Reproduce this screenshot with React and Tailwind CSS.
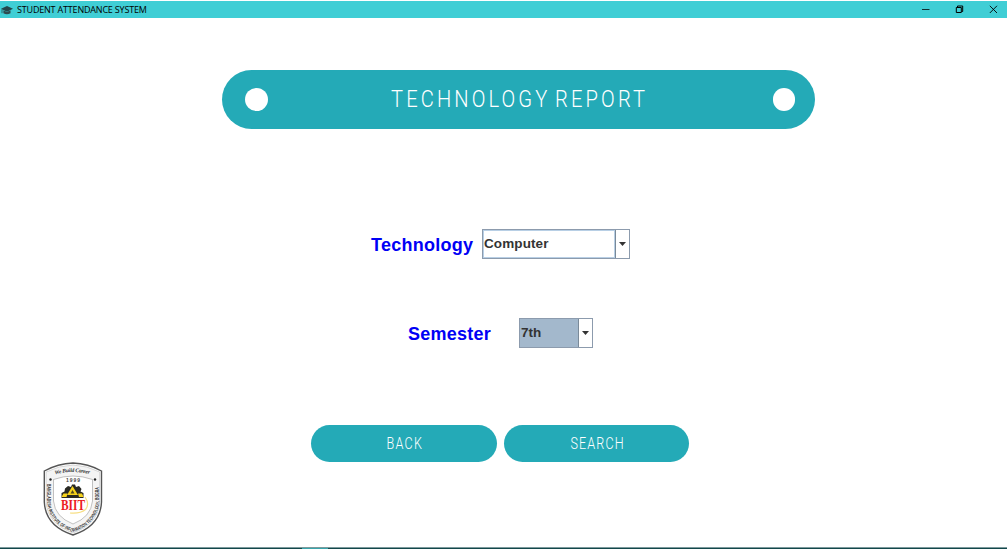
import React from "react";

function TitleBar() {
  return (
    <header className="mt-px flex h-[17px] w-[1007px] shrink-0 items-center justify-between bg-[#40ced5] text-black">
      <div className="flex items-center">
        <svg className="ml-[1px] h-[10px] w-[12px]" viewBox="0 0 12 10" aria-hidden="true">
          <path d="M0 3.8 6 1l6 2.8L6 6.7Z" fill="#24474c" />
          <path d="M2.4 5.2v3Q6 10.2 9.5 8.2v-3L6 7Z" fill="#2e4b50" />
          <path d="M1 4.2v4" stroke="#24474c" strokeWidth=".8" />
        </svg>
        <h1 className="ml-[4px] whitespace-nowrap font-['Open_Sans',sans-serif] text-[9px] leading-[17px] tracking-[-0.19px]">STUDENT ATTENDANCE SYSTEM</h1>
      </div>
      <div className="flex items-center gap-[25px] pr-[9px]">
        <button aria-label="Minimize"><svg className="block h-[9px] w-[9px]" viewBox="0 0 9 9"><path d="M1 4.5h7.5" stroke="#102f32" /></svg></button>
        <button aria-label="Restore"><svg className="block h-[9px] w-[9px]" viewBox="0 0 9 9" fill="none" stroke="#000"><path d="M1.3 2.5h5v5h-5ZM2.5 2.3V1h5.2v5.5H6.7" /></svg></button>
        <button aria-label="Close"><svg className="block h-[9px] w-[9px]" viewBox="0 0 9 9"><path d="m.8.8 7.2 7.2m0-7.2L.8 8" stroke="#000" strokeWidth=".9" /></svg></button>
      </div>
    </header>
  );
}

function Arrow() {
  return <svg className="h-[4px] w-[7px]" viewBox="0 0 7 4" aria-hidden="true"><path d="M0 0h7L3.5 4Z" fill="#333" /></svg>;
}

function Crest() {
  return (
    <svg className="ml-[42px] mt-[-1px] block h-[76px] w-[62px]" viewBox="0 0 62 76" role="img" aria-label="BIIT">
      <defs>
        <path id="motto" d="M13 13.5Q31 8.500 49 13.5" />
        <path id="ring" d="M6.2 23V41Q8 62 31 70Q54 62 56.200 41V22" />
      </defs>
      <path d="M31 2Q46 2.500 59.500 10V41Q58.500 65 31 74Q3.500 65 2.300 41V10Q16 2.500 31 2Z" fill="#fff" stroke="#555" strokeWidth="1.4" />
      <path d="M31 4Q45 4.500 57.700 11V41Q56.500 63 31 72Q5.500 63 4.100 41V11Q17 4.500 31 4Z" fill="#f4f4f4" stroke="#b5b5b5" strokeWidth=".5" />
      <path d="M11.500 18.5Q31 11.500 50.500 18.500V40Q49 56 31 63Q13 56 11.500 40Z" fill="#fff" stroke="#999" strokeWidth=".6" />
      <text className="font-['Liberation_Serif',serif] text-[5.5px] font-bold italic" fill="#333"><textPath href="#motto" textLength="35">We Build Career</textPath></text>
      <text dy="1" className="font-['Liberation_Sans',sans-serif] text-[4.8px] font-bold" fill="#333"><textPath href="#ring" textLength="114" lengthAdjust="spacingAndGlyphs">BANGLADESH INSTITUTE OF INFORMATION TECHNOLOGY, BOGRA</textPath></text>
      <circle cx="8.500" cy="18.500" r="1.200" fill="#222" /><circle cx="53" cy="18.500" r="1.200" fill="#222" />
      <text x="31" y="20.500" textAnchor="middle" textLength="14" className="font-['Liberation_Sans',sans-serif] text-[5px] font-bold" fill="#444">1999</text>
      <path d="M23 27.500 26 25l3 1 1-2.500h3l1 2.500 3-1 2.500 3-1 2.500 3 1.500v5H19.500V32l3-1.500Z" fill="#292923" />
      <path d="m30.500 25 5.500 9H25Z" fill="#f6d31c" />
      <path d="m19.500 36 2-3.500h4l-1 3.500Zm16.500-3.500h4l1.500 3.500H37Z" fill="#f6d31c" />
      <path d="m30.500 29 2 3.500h-4Z" fill="#514821" />
      <path d="M43 36Q48 43 43.500 48.500Q38 53 28 52" fill="none" stroke="#f7df85" strokeWidth="1.200" />
      <text x="31" y="49" textAnchor="middle" textLength="24" lengthAdjust="spacingAndGlyphs" className="font-['Liberation_Serif',serif] text-[15px] font-bold" fill="#ed1c24">BIIT</text>
    </svg>
  );
}

export default function App() {
  return (
    <div className="flex h-[550px] w-[1008px] flex-col overflow-hidden bg-white">
      <TitleBar />
      <main className="flex min-h-0 flex-1 flex-col">
        <div className="ml-[222px] mt-[52px] flex h-[59px] w-[593px] shrink-0 items-center justify-between rounded-[30px] bg-[#24aab7] pl-[23px] pr-[20px]">
          <span className="h-[23px] w-[22.5px] rounded-full bg-white" />
          <h2 className="mr-[2px] mt-[-2px] w-[258px] whitespace-nowrap font-['Roboto',sans-serif] text-[24px] font-light leading-[30px] text-white"><span className="ml-px inline-block origin-left scale-x-[.84] tracking-[3.7px] [word-spacing:-4px]">TECHNOLOGY REPORT</span></h2>
          <span className="h-[23px] w-[22.5px] rounded-full bg-white" />
        </div>
        <div className="ml-[371px] mt-[100px] flex h-[30px] shrink-0">
          <label className="w-[111px] pt-[5px] font-['Liberation_Sans',sans-serif] text-[18px] font-bold leading-[22px] tracking-[.25px] text-[#0000f5]">Technology</label>
          <button className="flex h-[30px] w-[148px] border border-[#8c9bad] text-left">
            <span className="flex h-[28px] w-[132px] border border-[#b8cfe5] font-['Liberation_Sans',sans-serif] text-[13.5px] font-bold leading-[25px] tracking-[.1px] text-[#333]">Computer</span>
            <span className="flex h-[28px] flex-1 items-center justify-center border-l border-[#7a8a99]"><Arrow /></span>
          </button>
        </div>
        <div className="ml-[408px] mt-[59px] flex h-[30px] shrink-0">
          <label className="w-[111px] pt-[5px] font-['Liberation_Sans',sans-serif] text-[18px] font-bold leading-[22px] tracking-[.25px] text-[#0000f5]">Semester</label>
          <button className="flex h-[30px] w-[74px] border border-[#8c9bad] text-left">
            <span className="h-[28px] w-[58px] bg-[#a3b8cc] pl-[1px] font-['Liberation_Sans',sans-serif] text-[13.5px] font-bold leading-[27px] text-[#333]">7th</span>
            <span className="flex h-[28px] flex-1 items-center justify-center border-l border-[#7a8a99]"><Arrow /></span>
          </button>
        </div>
        <div className="ml-[311px] mt-[77px] flex h-[37px] shrink-0 gap-[7px]">
          <button className="h-[37px] w-[186px] rounded-[19px] bg-[#24aab7] font-['Roboto',sans-serif] text-[17px] font-light leading-[37px] text-white"><span className="ml-px inline-block scale-x-[.74] tracking-[1.7px]">BACK</span></button>
          <button className="h-[37px] w-[185px] rounded-[19px] bg-[#24aab7] font-['Roboto',sans-serif] text-[17px] font-light leading-[37px] text-white"><span className="ml-[2px] inline-block scale-x-[.74] tracking-[1.5px]">SEARCH</span></button>
        </div>
        <Crest />
      </main>
      <footer className="mb-px h-[2px] w-[1007px] shrink-0 border-t border-[#7d9a9c] bg-[#12474b]"><div className="ml-[302px] h-px w-[26px] bg-[#39a5ac]" /></footer>
    </div>
  );
}
